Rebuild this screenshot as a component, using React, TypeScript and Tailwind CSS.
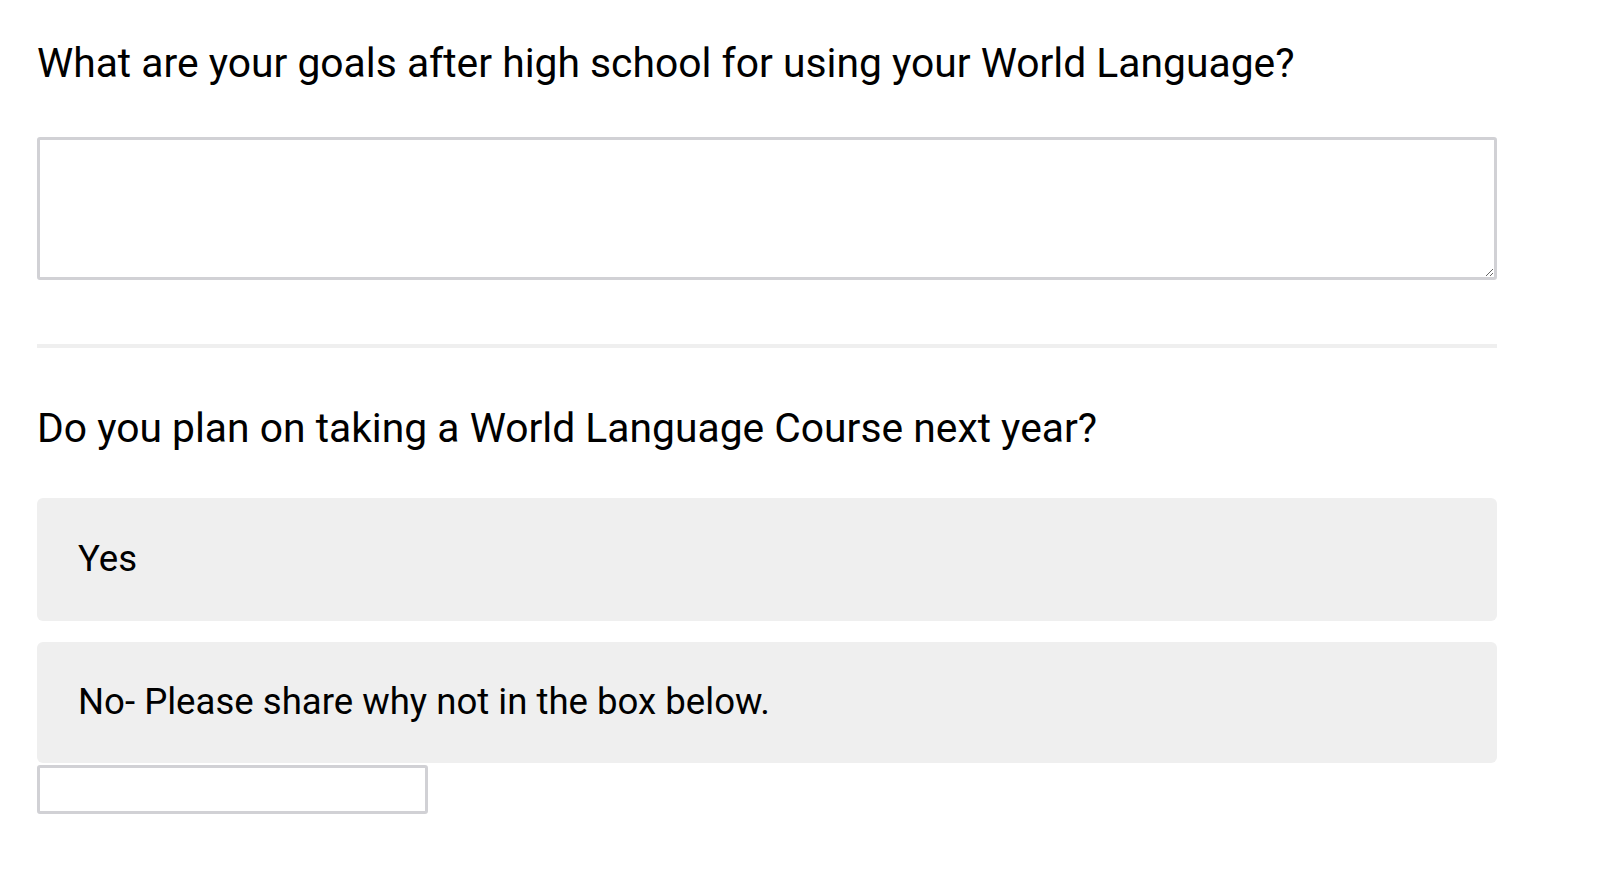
export default function App() {
  return (
    <div className="min-h-screen bg-white pl-[37px] pt-[39px]" style={{ fontFamily: 'Roboto, "Liberation Sans", sans-serif' }}>
      <div className="w-[1460px]">
        <div className="text-[40.8px] leading-[48px] text-black">
          What are your goals after high school for using your World Language?
        </div>

        <textarea
          className="mt-[50px] block h-[143px] w-full rounded-[3px] border-[3px] border-[#d1d1d5] bg-white"
          aria-label="Goals"
        />

        <div className="mt-[64px] h-[4px] w-full bg-[#efefef]" />

        <div className="mt-[56px] text-[40.8px] leading-[48px] text-black">
          Do you plan on taking a World Language Course next year?
        </div>

        <div className="mt-[46px] flex flex-col">
          <div className="flex h-[123px] items-center rounded-[6px] bg-[#efefef] pl-[41px] text-[36.6px] text-black">
            Yes
          </div>
          <div className="mt-[21px] flex h-[121px] items-center rounded-[6px] bg-[#efefef] pl-[41px] text-[36.6px] text-black">
            No- Please share why not in the box below.
          </div>
          <input
            type="text"
            className="mt-[2px] block h-[49px] w-[391px] rounded-[3px] border-[3px] border-[#d1d1d5] bg-white"
            aria-label="Why not"
          />
        </div>
      </div>
    </div>
  );
}
